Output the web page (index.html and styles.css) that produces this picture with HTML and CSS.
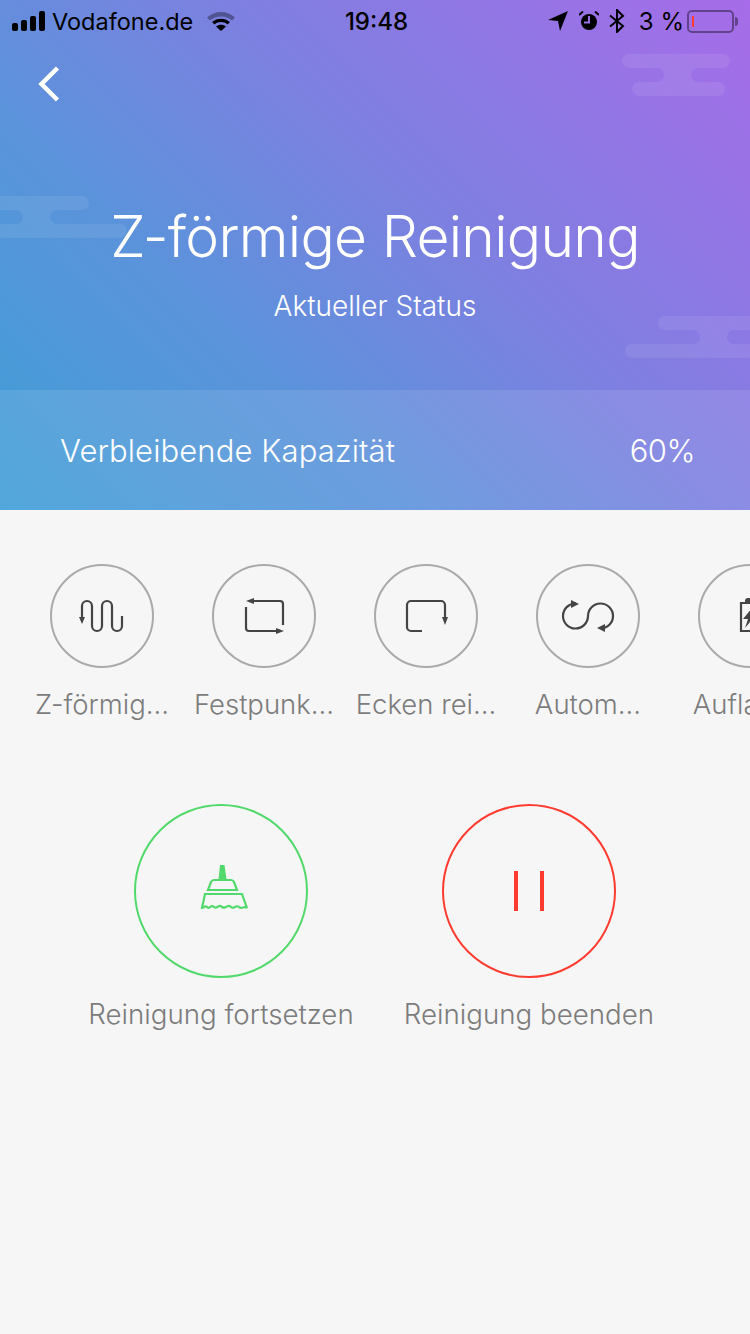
FILE: index.html
```html
<!DOCTYPE html>
<html lang="de">
<head>
    <meta charset="UTF-8">
    <meta name="viewport" content="width=device-width, initial-scale=1.0">
    <title>Z-förmige Reinigung</title>
    <link rel="stylesheet" href="styles.css">
</head>
<body>
    <header class="hero">
        <!-- clouds -->
        <svg class="cloud cloud-top" width="110" height="42" viewBox="0 0 110 42"><path d="M7 0H101a7 7 0 0 1 0 14H76a7 7 0 0 0 0 14H96a7 7 0 0 1 0 14H17a7 7 0 0 1 0-14H35a7 7 0 0 0 0-14H7a7 7 0 0 1 0-14Z"/></svg>
        <svg class="cloud cloud-left" width="128" height="42" viewBox="0 0 128 42"><path d="M0 0H82a7 7 0 0 1 0 14H57a7 7 0 0 0 0 14H120a7 7 0 0 1 0 14H0V28H16a7 7 0 0 0 0-14H0Z"/></svg>
        <svg class="cloud cloud-right" width="125" height="42" viewBox="0 0 125 42"><path d="M40 0H125V14H109a7 7 0 0 0 0 14H125V42H7a7 7 0 0 1 0-14H68a7 7 0 0 0 0-14H40a7 7 0 0 1 0-14Z"/></svg>

        <div class="statusbar">
            <div class="status-left">
                <div class="signal"><i></i><i></i><i></i><i></i></div>
                <span class="carrier">Vodafone.de</span>
                <svg class="wifi" width="28" height="20" viewBox="0 0 28 20">
                    <path d="M0 6.500C7.500 -1 20.500 -1 28 6.500L25 9.500C19 4 9 4 3 9.500Z" fill="#000" opacity=".35"/>
                    <path d="M5 11C10 6.500 18 6.500 23 11L20.500 13.500C16.500 10.300 11.500 10.300 7.500 13.500Z"/>
                    <path d="M9 15.500C12 13.200 16 13.200 19 15.500L14 20Z"/>
                </svg>
            </div>
            <span class="clock">19:48</span>
            <div class="status-right">
                <svg class="location" width="20" height="20" viewBox="0 0 20 20"><path d="M0 9L20 0L12 20L10 10Z"/></svg>
                <svg width="20" height="20" viewBox="0 0 20 20">
                    <circle cx="10" cy="11" r="8"/>
                    <path d="M10 5V11.500H5" fill="none" stroke="#9a6fe6" stroke-width="2"/>
                    <path d="M0 4L4 0.500M20 4L16 0.500" fill="none" stroke="#000" stroke-width="2"/>
                </svg>
                <svg width="16" height="24" viewBox="0 0 16 24"><path d="M1 6.500L14 17L8 23V1L14 7L1 17.500" fill="none" stroke="#000" stroke-width="2"/></svg>
                <span class="percent">3 %</span>
                <div class="battery"><i></i></div>
                <div class="battery-tip"></div>
            </div>
        </div>

        <svg class="back" width="24" height="38" viewBox="0 0 24 38"><path d="M20.500 3L4.500 19L20.500 35" fill="none" stroke="#fff" stroke-width="4.500"/></svg>

        <div class="hero-text">
            <h1>Z-förmige Reinigung</h1>
            <p>Aktueller Status</p>
        </div>

        <div class="capacity">
            <span class="capacity-label">Verbleibende Kapazität</span>
            <span class="capacity-value">60%</span>
        </div>
    </header>

    <section class="modes">
        <div class="mode">
            <div class="mode-circle">
                <svg width="50" height="40" viewBox="0 0 50 40"><path d="M5 22V10a5 5 0 0 1 10 0V30a5 5 0 0 0 10 0V10a5 5 0 0 1 10 0V30a5 5 0 0 0 10 0V20" fill="none"/><path class="arrow" d="M2 21H8L5 28Z"/></svg>
            </div>
            <span>Z-förmig...</span>
        </div>
        <div class="mode">
            <div class="mode-circle">
                <svg width="50" height="40" viewBox="0 0 50 40"><path d="M14 5H41a3 3 0 0 1 3 3V29M7 11V32a3 3 0 0 0 3 3H37" fill="none"/><path class="arrow" d="M7 5L15 2V8Z"/><path class="arrow" d="M45 35L37 32V38Z"/></svg>
            </div>
            <span>Festpunk...</span>
        </div>
        <div class="mode">
            <div class="mode-circle">
                <svg width="50" height="40" viewBox="0 0 50 40"><path d="M21 35H10a4 4 0 0 1-4-4V9a4 4 0 0 1 4-4H40a4 4 0 0 1 4 4V22" fill="none"/><path class="arrow" d="M41 21H47L44 29Z"/></svg>
            </div>
            <span>Ecken rei...</span>
        </div>
        <div class="mode">
            <div class="mode-circle">
                <svg width="56" height="40" viewBox="0 0 56 40"><path d="M16 7.500A12.500 12.500 0 1 0 28 20A12.500 12.500 0 1 1 41 32.500" fill="none"/><path class="arrow" d="M19 8L11 4V12Z"/><path class="arrow" d="M37 32L45 28V36Z"/></svg>
            </div>
            <span>Autom...</span>
        </div>
        <div class="mode">
            <div class="mode-circle">
                <svg width="50" height="40" viewBox="0 0 50 40"><path d="M16 7H34V35H16Z" fill="none"/><path class="arrow" d="M20 7V4a3 3 0 0 1 3-2H27a3 3 0 0 1 3 2V7Z"/><path class="arrow" d="M28 11L18 23H23L20 32L31 19H26Z"/></svg>
            </div>
            <span>Aufladen</span>
        </div>
    </section>

    <section class="actions">
        <div class="action">
            <div class="action-circle action-go">
                <svg width="56" height="56" viewBox="0 0 56 56">
                    <path d="M27 2H31.500L33.500 16H25.500Z" fill="#52d96b"/>
                    <path d="M15 27L18 19Q19 17 21 17H38Q40 17 41 19L44 27H15ZM12 31H49L54 45C51 42 49 47 46 44C43 41 41 47 38 44C35 40 33 47 29 44C26 40 24 47 21 44C18 41 16 47 14 44C12 42 11 45 9 45Z" fill="none" stroke="#52d96b" stroke-width="2.200"/>
                </svg>
            </div>
            <span>Reinigung fortsetzen</span>
        </div>
        <div class="action">
            <div class="action-circle action-stop">
                <div class="pause"><i></i><i></i></div>
            </div>
            <span>Reinigung beenden</span>
        </div>
    </section>
</body>
</html>
```

FILE: styles.css
```css
* {
    box-sizing: border-box;
}

body {
    margin: 0;
    width: 750px;
    height: 1334px;
    overflow: hidden;
    background-color: #f6f6f6;
    font-family: 'Inter', 'Liberation Sans', sans-serif;
}

.hero {
    position: relative;
    height: 510px;
    display: flex;
    flex-direction: column;
    color: #ffffff;
    background: linear-gradient(225deg, #a76ce9 0%, #7d80e0 42%, #5b93db 68%, #3f9ed6 100%);
    overflow: hidden;
}

.cloud {
    position: absolute;
    fill: rgba(255, 255, 255, 0.08);
}

.cloud-top {
    left: 622px;
    top: 54px;
}

.cloud-left {
    left: 0;
    top: 196px;
}

.cloud-right {
    left: 625px;
    top: 316px;
}

.statusbar {
    height: 40px;
    padding: 2px 12px 0 12px;
    display: flex;
    align-items: center;
    justify-content: space-between;
    color: #000000;
}

.status-left, .status-right {
    width: 300px;
    display: flex;
    align-items: center;
}

.status-right {
    justify-content: flex-end;
    gap: 10px;
}

.signal {
    display: flex;
    align-items: flex-end;
    gap: 3px;
    height: 20px;
}

.signal i {
    width: 6px;
    background: #000000;
    border-radius: 2px;
}

.signal i:nth-child(1) { height: 8px; }
.signal i:nth-child(2) { height: 11px; }
.signal i:nth-child(3) { height: 15px; }
.signal i:nth-child(4) { height: 20px; }

.carrier {
    margin-left: 7px;
    font-size: 23.5px;
}

.wifi {
    margin-left: 14px;
}

.clock {
    margin-left: 3px;
    font-size: 24px;
    font-weight: 500;
}

.location {
    margin-right: 1px;
}

.percent {
    font-size: 24px;
    margin-left: 4px;
}

.battery {
    width: 47px;
    height: 23px;
    margin-left: -7px;
    padding: 4px 3px;
    border: 2px solid rgba(0, 0, 0, 0.4);
    border-radius: 5px;
}

.battery i {
    display: block;
    width: 2px;
    height: 100%;
    background: #ff3b30;
}

.battery-tip {
    width: 3px;
    height: 9px;
    margin-left: -9px;
    background: rgba(0, 0, 0, 0.4);
    border-radius: 0 3px 3px 0;
}

.back {
    margin: 25px 0 0 37px;
}

.hero-text {
    text-align: center;
}

h1 {
    margin: 101px 0 0;
    font-size: 57px;
    font-weight: 300;
    letter-spacing: -0.7px;
    line-height: 66px;
}

.hero-text p {
    margin: 21px 0 0;
    font-size: 28px;
    font-weight: 300;
    line-height: 30px;
}

.capacity {
    margin-top: auto;
    height: 120px;
    padding: 0 55px 0 60px;
    display: flex;
    align-items: center;
    justify-content: space-between;
    font-size: 31px;
    font-weight: 300;
    background: rgba(255, 255, 255, 0.1);
}

.capacity-label {
    letter-spacing: 0.1px;
}

.capacity-value {
    letter-spacing: -0.5px;
}

.modes {
    display: flex;
    padding: 54px 0 0 21px;
    overflow: hidden;
}

.mode {
    flex: 0 0 162px;
    display: flex;
    flex-direction: column;
    align-items: center;
    color: #7c7c7c;
    font-size: 27.5px;
    font-weight: 300;
    white-space: nowrap;
}

.mode span {
    margin-top: 20px;
    line-height: 32px;
}

.mode-circle {
    width: 104px;
    height: 104px;
    display: flex;
    align-items: center;
    justify-content: center;
    border: 2px solid #aaaaaa;
    border-radius: 50%;
}

.mode-circle svg path {
    stroke: #444444;
    stroke-width: 2.200;
}

.mode-circle svg .arrow {
    stroke: none;
    fill: #444444;
}

.actions {
    display: flex;
    justify-content: center;
    margin-top: 84px;
}

.action {
    flex: 0 0 308px;
    display: flex;
    flex-direction: column;
    align-items: center;
    color: #7c7c7c;
    font-size: 27.7px;
    font-weight: 300;
}

.action span {
    margin-top: 20px;
    line-height: 32px;
}

.action-circle {
    flex: 0 0 174px;
    width: 174px;
    height: 174px;
    display: flex;
    align-items: center;
    justify-content: center;
    border-radius: 50%;
    border: 2px solid;
}

.action-go {
    border-color: #52d96b;
}

.action-stop {
    border-color: #ff3b30;
}

.pause {
    display: flex;
    gap: 22px;
}

.pause i {
    width: 4px;
    height: 40px;
    background: #ff3b30;
}
```
